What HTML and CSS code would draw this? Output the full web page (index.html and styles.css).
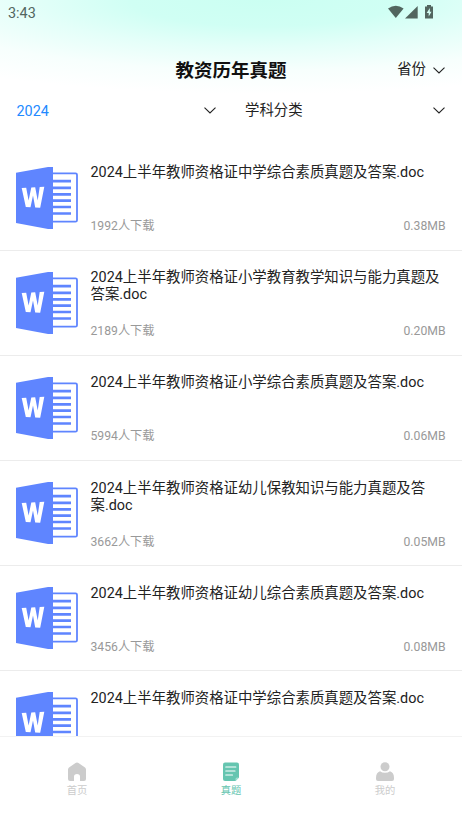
FILE: index.html
```html
<!DOCTYPE html>
<html lang="zh-CN">
<head>
<meta charset="utf-8">
<title>教资历年真题</title>
<link rel="stylesheet" href="styles.css">
</head>
<body>
<svg class="defs" width="0" height="0" aria-hidden="true">
  <symbol id="word" viewBox="0 0 62 62">
    <path d="M36 6.300H59.500Q61 6.300 61 7.800V53.200Q61 54.700 59.500 54.700H36" fill="#fff" stroke="#5f85ff" stroke-width="1.800"/>
    <path d="M36 14.200H55M36 20.800H55M36 27.300H55M36 33.700H55M36 40H55M36 46.500H55" stroke="#5f85ff" stroke-width="2.700"/>
    <path d="M0 5.800L32 0H37V62H32L0 56Z" fill="#5f85ff"/>
    <path d="M5.700 21L10.200 20.800L12.600 33.500L15.300 20.500L19.200 20.300L21.700 33.500L23.700 20L28.300 19.700L24.200 40.800L19.200 40.500L17 28.500L14.500 40.200L9.800 39.900Z" fill="#fff"/>
  </symbol>
  <symbol id="chevron" viewBox="0 0 12 7">
    <path d="M.500.700L6 6L11.500.700" fill="none" stroke="#222" stroke-width="1.100"/>
  </symbol>
</svg>
<div class="app">
  <div class="status">
    <span>3:43</span>
    <svg width="48" height="16" viewBox="0 0 48 16" fill="#52665f">
      <path d="M0 4.500Q7.800-1 15.600 4.500L7.800 14Z"/>
      <path d="M17 14.500L29.700 2V14.500Z"/>
      <path d="M37 2.500H39V1H43V2.500H45V14.500H37Z"/>
      <path d="M41.800 4L38.700 9H40.700V12.500L43.500 7.700H41.800Z" fill="#d5fff5"/>
    </svg>
  </div>
  <header class="header">
    <h1>教资历年真题</h1>
    <div class="province"><span>省份</span><svg class="chevron"><use href="#chevron"/></svg></div>
  </header>
  <div class="filters">
    <div class="filter active"><span>2024</span><svg class="chevron"><use href="#chevron"/></svg></div>
    <div class="filter"><span class="label">学科分类</span><svg class="chevron"><use href="#chevron"/></svg></div>
  </div>
  <main class="list">
    <article class="item"><svg class="doc"><use href="#word"/></svg><div class="info"><h2>2024上半年教师资格证中学综合素质真题及答案.doc</h2><div class="meta"><span>1992人下载</span><span>0.38MB</span></div></div></article>
    <article class="item"><svg class="doc"><use href="#word"/></svg><div class="info"><h2>2024上半年教师资格证小学教育教学知识与能力真题及答案.doc</h2><div class="meta"><span>2189人下载</span><span>0.20MB</span></div></div></article>
    <article class="item"><svg class="doc"><use href="#word"/></svg><div class="info"><h2>2024上半年教师资格证小学综合素质真题及答案.doc</h2><div class="meta"><span>5994人下载</span><span>0.06MB</span></div></div></article>
    <article class="item"><svg class="doc"><use href="#word"/></svg><div class="info"><h2>2024上半年教师资格证幼儿保教知识与能力真题及答案.doc</h2><div class="meta"><span>3662人下载</span><span>0.05MB</span></div></div></article>
    <article class="item"><svg class="doc"><use href="#word"/></svg><div class="info"><h2>2024上半年教师资格证幼儿综合素质真题及答案.doc</h2><div class="meta"><span>3456人下载</span><span>0.08MB</span></div></div></article>
    <article class="item"><svg class="doc"><use href="#word"/></svg><div class="info"><h2>2024上半年教师资格证中学综合素质真题及答案.doc</h2></div></article>
  </main>
  <nav class="tabs">
    <a class="tab"><svg width="20" height="20" viewBox="0 0 20 20"><path d="M8.500.900Q10 0 11.500.900L18 5.600Q19 6.400 19 7.600V17Q19 19 17 19H13V14.500Q13 12 10 12T7 14.500V19H3Q1 19 1 17V7.600Q1 6.400 2 5.600Z" fill="#ccc"/></svg>首页</a>
    <a class="tab current"><svg width="20" height="20" viewBox="0 0 20 20"><path d="M4 .500H16Q18 .500 18 2.500V15.500L14.500 19H4Q2 19 2 17V2.500Q2 .500 4 .500Z" fill="#65c5b0"/><path d="M4.800 5H14.800M4.800 9H14M4.800 13H11.500" stroke="#fff" stroke-width="1.200" stroke-linecap="round"/><path d="M14.500 19V17Q14.500 15.500 16 15.500H18Z" fill="#9fe0d0"/></svg>真题</a>
    <a class="tab"><svg width="20" height="20" viewBox="0 0 20 20" fill="#ccc"><circle cx="10" cy="4.800" r="4.500"/><path d="M5 9.200Q7 10.800 10 10.800T15 9.200Q19 10.500 19 16V17Q19 19 17 19H3Q1 19 1 17V16Q1 10.500 5 9.200Z"/></svg>我的</a>
  </nav>
</div>
</body>
</html>
```
FILE: styles.css
```css
* {
  box-sizing: border-box;
}

body {
  margin: 0;
  font-family: Roboto, "Noto Sans CJK SC", sans-serif;
  color: #222;
  background: #fff;
}

h1, h2 {
  margin: 0;
}

.defs {
  display: block;
}

.app {
  height: 821px;
  display: flex;
  flex-direction: column;
  overflow: hidden;
  background: radial-gradient(ellipse 480px 94px at 265px 0, #cbfff2 0%, #d0fff4 28%, #e4fff9 50%, #f7fffd 75%, #fff 100%) no-repeat;
}

.status {
  height: 26px;
  flex: none;
  display: flex;
  justify-content: space-between;
  padding: 4px 26px 0 8px;
  font-size: 14.4px;
  line-height: 19px;
  color: #52665f;
}

.header {
  height: 62px;
  flex: none;
  display: grid;
  grid-template-columns: 1fr auto 1fr;
  align-items: center;
  padding: 26px 17px 0 17px;
}

.header h1 {
  grid-column: 2;
  padding-top: 2px;
  font-size: 18.5px;
  line-height: 27px;
  font-weight: 700;
  color: #111;
}

.province {
  display: flex;
  justify-content: flex-end;
  align-items: center;
  gap: 7px;
  font-size: 14.4px;
  line-height: 20px;
}

.province span {
  padding-bottom: 0;
}

.chevron {
  width: 12px;
  height: 7px;
  flex: none;
}

.filters {
  height: 57.5px;
  flex: none;
  display: grid;
  grid-template-columns: 199.5px 200px;
  column-gap: 29px;
  padding: 12px 0 0 16.5px;
}

.filter {
  height: 20px;
  display: flex;
  align-items: center;
  justify-content: space-between;
  font-size: 14.4px;
  line-height: 20px;
}

.filter .label {
  padding-top: 1px;
}

.active span {
  padding-top: 3px;
  color: #2189ff;
}

.list {
  height: 591.5px;
  flex: none;
  overflow: hidden;
  border-bottom: 1px solid #f2f2f2;
}

.item {
  height: 105.2px;
  display: flex;
  gap: 12.5px;
  padding: 18px 16.5px 0 16px;
  border-bottom: 1px solid #ececec;
}

.doc {
  width: 62px;
  height: 62px;
  margin-top: 3px;
  flex: none;
}

.info {
  flex: 1;
  height: 70.5px;
  display: flex;
  flex-direction: column;
  justify-content: space-between;
}

.info h2 {
  padding-top: 0.5px;
  font-size: 14.4px;
  line-height: 17.2px;
  font-weight: 400;
}

.meta {
  display: flex;
  justify-content: space-between;
  font-size: 12.2px;
  line-height: 16px;
  color: #999;
}

.tabs {
  flex: 1;
  display: grid;
  grid-template-columns: repeat(3, 1fr);
  padding-top: 25px;
}

.tab {
  display: flex;
  flex-direction: column;
  align-items: center;
  gap: 1px;
  font-size: 10.3px;
  line-height: 16px;
  color: #ccc;
}

.current {
  color: #65c5b0;
}
```
